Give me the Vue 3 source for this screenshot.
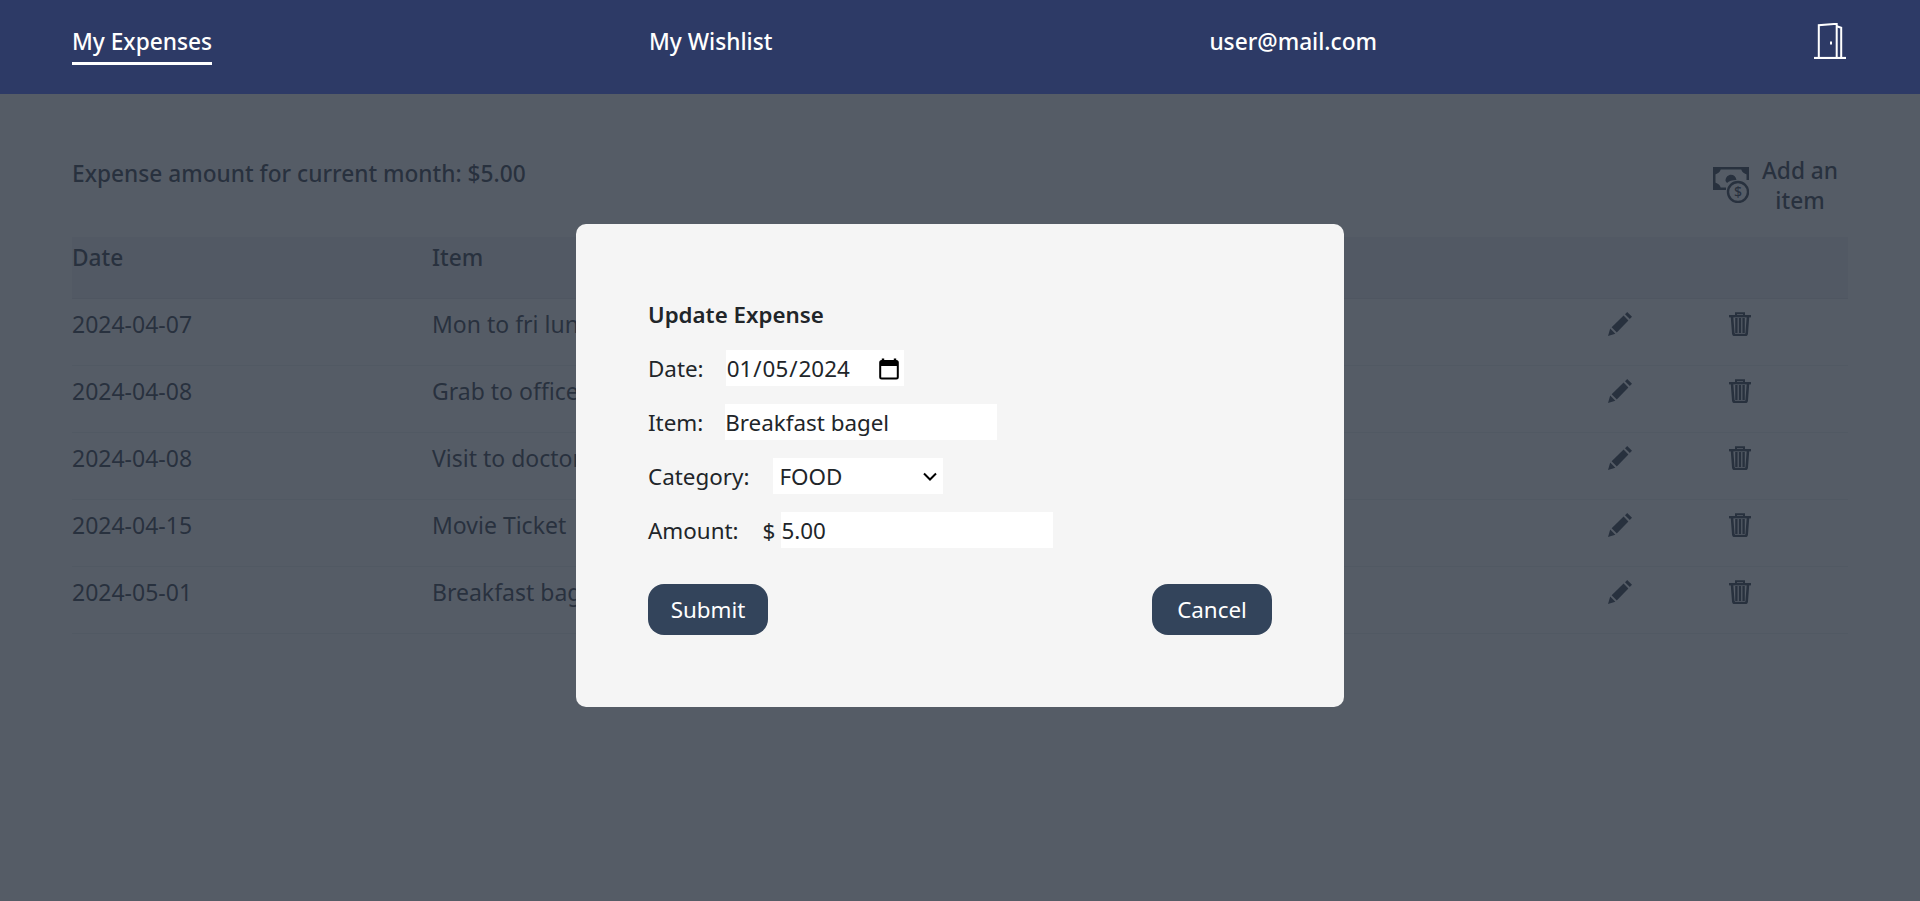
<script setup>
import { ref } from "vue";

let expenses = ref([
  { id: 1, date: "2024-04-07", item: "Mon to fri lunch" },
  { id: 2, date: "2024-04-08", item: "Grab to office" },
  { id: 3, date: "2024-04-08", item: "Visit to doctor" },
  { id: 4, date: "2024-04-15", item: "Movie Ticket" },
  { id: 5, date: "2024-05-01", item: "Breakfast bagel" },
]);
let date = ref("2024-01-05");
let item = ref("Breakfast bagel");
let category = ref("FOOD");
let amount = ref("5.00");
</script>

<template>
  <nav class="nav">
    <a class="nav-link active">My Expenses</a>
    <a class="nav-link">My Wishlist</a>
    <span class="nav-link">user@mail.com</span>
    <svg class="door" width="32" height="36" viewBox="0 0 32 36" fill="none" stroke="#fff" stroke-width="2">
      <path d="M4.8 35V2.2L22.7 .8V35" />
      <path d="M22.7 3.2L27.2 4.8V35" />
      <path d="M0 35H32" stroke-width="2.2" />
      <path d="M17 18.5V21.5" stroke-width="2" />
    </svg>
  </nav>

  <main class="page">
    <div class="summary">
      <p class="total">Expense amount for current month: $5.00</p>
      <div class="add-item">
        <svg width="36" height="36" viewBox="0 0 36 36">
          <path d="M1.2 1.2H34.8V13M13 21.8H1.2V1.2" fill="none" stroke="currentColor" stroke-width="2.6" />
          <path d="M0 0H8C8 5 5 7 0 8ZM36 0H28C28 5 31 7 36 8ZM0 23H8C8 18 5 16 0 15Z" fill="currentColor" />
          <path d="M12.5 14C12.5 6 22.5 5.5 23.5 13C19 13 16 14 14 16Z" fill="currentColor" />
          <circle cx="25" cy="25" r="10" fill="none" stroke="currentColor" stroke-width="2.4" />
          <text x="25" y="30" text-anchor="middle" font-size="14" font-weight="500" fill="currentColor">$</text>
        </svg>
        <span class="add-label">Add an item</span>
      </div>
    </div>

    <table class="table">
      <thead>
        <tr>
          <th class="col-wide">Date</th>
          <th class="col-wide">Item</th>
          <th></th>
          <th class="col-edit"></th>
          <th class="col-delete"></th>
        </tr>
      </thead>
      <tbody>
        <tr v-for="expense in expenses" :key="expense.id">
          <td>{{ expense.date }}</td>
          <td>{{ expense.item }}</td>
          <td></td>
          <td>
            <svg class="row-icon" width="24" height="24" viewBox="0 0 24 24" fill="currentColor">
              <path d="M0 24L2.2 16.6L7.4 21.8Z" />
              <path d="M3.6 15.2L15.6 3.6L20.4 8.4L8.8 20.4Z" />
              <path d="M17 2.2L19.2 0L24 4.8L21.8 7Z" />
            </svg>
          </td>
          <td>
            <svg class="row-icon trash" width="22" height="24" viewBox="0 0 22 24" fill="none" stroke="currentColor">
              <path d="M0 4.2H22" stroke-width="2.4" />
              <path d="M7 4V1.2H15V4" stroke-width="2" />
              <path d="M3 4.5L4.3 21.5Q4.5 23 6 23H16Q17.5 23 17.7 21.5L19 4.5" stroke-width="2.6" />
              <path d="M7.4 6V21M11 6V21M14.6 6V21" stroke-width="2.4" />
            </svg>
          </td>
        </tr>
      </tbody>
    </table>
  </main>

  <div class="overlay">
    <form class="modal" @submit.prevent>
      <h2 class="modal-title">Update Expense</h2>
      <div class="field">
        <label>Date:</label>
        <input v-model="date" class="date-input" type="date" />
      </div>
      <div class="field">
        <label>Item:</label>
        <input v-model="item" class="text-input" type="text" />
      </div>
      <div class="field">
        <label>Category:</label>
        <select v-model="category" class="select">
          <option>FOOD</option>
          <option>TRANSPORT</option>
          <option>OTHERS</option>
        </select>
      </div>
      <div class="field">
        <label>Amount:</label>
        <span class="currency">$</span>
        <input v-model="amount" class="text-input" type="text" />
      </div>
      <div class="actions">
        <button class="btn" type="submit">Submit</button>
        <button class="btn" type="button">Cancel</button>
      </div>
    </form>
  </div>
</template>

<style>
body {
  background: #fff;
}
</style>

<style scoped>
.nav,
.page,
.overlay,
input,
select,
button {
  font-family: "Noto Sans", "Open Sans", sans-serif;
}

.nav {
  position: relative;
  z-index: 2;
  height: 94px;
  box-sizing: border-box;
  padding: 0 72px 4px;
  background: #2d3a66;
  display: flex;
  justify-content: space-between;
  align-items: center;
}

.nav-link {
  color: #fff;
  font-size: 22.7px;
  font-weight: 500;
  line-height: 34px;
  padding-bottom: 3px;
  border-bottom: 3px solid transparent;
}

.nav-link.active {
  border-bottom-color: #fff;
}

.door {
  margin: 0 2px 8px 0;
}

.page {
  padding: 64px 72px 0;
  color: #1f2a3a;
  font-size: 23px;
}

.summary {
  display: flex;
  justify-content: space-between;
  align-items: flex-start;
  height: 79px;
}

.total {
  margin: 0;
  font-size: 22.7px;
  font-weight: 500;
  line-height: 32px;
}

.add-item {
  display: flex;
  align-items: flex-start;
  gap: 12px;
  padding-right: 9px;
  margin-top: 9px;
  font-size: 22.7px;
  font-weight: 500;
}

.add-label {
  width: 78px;
  margin-top: -11px;
  text-align: center;
  line-height: 30px;
}

.table {
  width: 100%;
  border-collapse: collapse;
  table-layout: fixed;
}

.table th {
  height: 61px;
  padding: 0;
  text-align: left;
  vertical-align: top;
  line-height: 41px;
  font-size: 22.7px;
  font-weight: 500;
  background: #f0f0f2;
  border-bottom: 1px solid #dee2e6;
}

.table td {
  height: 50px;
  padding: 0 0 16px;
  border-bottom: 1px solid #eceef0;
}

.col-wide {
  width: 360px;
}

.col-edit {
  width: 120px;
}

.col-delete {
  width: 123px;
}

.row-icon {
  display: block;
  margin-left: 3px;
}

.trash {
  margin-left: 4px;
}

.overlay {
  position: fixed;
  inset: 0;
  z-index: 1;
  background: rgba(43, 51, 64, 0.8);
  display: flex;
  justify-content: center;
  align-items: flex-start;
  padding-top: 224px;
  box-sizing: border-box;
}

.modal {
  width: 768px;
  height: 483px;
  box-sizing: border-box;
  padding: 72px;
  background: #f5f5f5;
  border-radius: 10px;
  color: #212529;
  font-size: 22.4px;
}

.modal-title {
  margin: 0 0 17px;
  padding-top: 1px;
  font-size: 22.3px;
  font-weight: 600;
  line-height: 36px;
}

.field {
  display: flex;
  align-items: center;
  height: 36px;
  margin-bottom: 18px;
}

.field label {
  margin-right: 22px;
  padding-top: 1px;
  line-height: 36px;
}

.currency {
  margin: 1px 6px 0 2px;
}

.date-input,
.text-input,
.select {
  height: 36px;
  box-sizing: border-box;
  border: none;
  outline: none;
  padding: 1px 0 0;
  background-color: #fff;
  color: #212529;
  font-size: 22.4px;
  border-radius: 0;
}

.date-input {
  width: 178px;
}

.date-input::-webkit-calendar-picker-indicator {
  width: 24px;
  height: 24px;
  padding: 0;
  margin: 0 3px 0 0;
  background: url("data:image/svg+xml,%3Csvg xmlns='http://www.w3.org/2000/svg' viewBox='0 0 24 24'%3E%3Cpath d='M6 1.5V6M18 1.5V6' stroke='%23000' stroke-width='2.4' fill='none'/%3E%3Crect x='3.2' y='4' width='17.6' height='17.6' rx='1.5' fill='none' stroke='%23000' stroke-width='2'/%3E%3Cpath d='M3 4H21V9H3Z'/%3E%3C/svg%3E") center / 24px 24px no-repeat;
  opacity: 1;
}

.text-input {
  width: 272px;
}

.select {
  width: 170px;
  margin-left: 2px;
  padding-left: 6px;
  appearance: none;
  background-image: url("data:image/svg+xml,%3Csvg xmlns='http://www.w3.org/2000/svg' viewBox='0 0 14 9'%3E%3Cpath d='M1 1.5L7 7.5L13 1.5' fill='none' stroke='%23000' stroke-width='2'/%3E%3C/svg%3E");
  background-repeat: no-repeat;
  background-size: 14px 9px;
  background-position: 150px 14px;
}

.actions {
  display: flex;
  justify-content: space-between;
  margin-top: 36px;
}

.btn {
  width: 120px;
  height: 51px;
  border: none;
  border-radius: 16px;
  background: #33445b;
  color: #fff;
  font-size: 22.4px;
}
</style>
